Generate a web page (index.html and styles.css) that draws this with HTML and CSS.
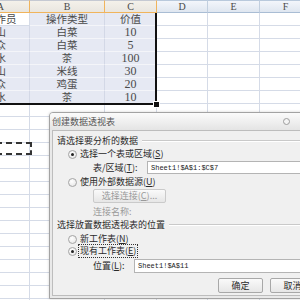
FILE: index.html
```html
<!DOCTYPE html>
<html lang="zh-CN">
<head>
<meta charset="utf-8">
<title>创建数据透视表</title>
<link rel="stylesheet" href="styles.css">
</head>
<body>
<div class="sheet">
  <div class="h s ha"><span>A</span></div><div class="h s">B</div><div class="h s">C</div><div class="h">D</div><div class="h">E</div><div class="h">F</div>

  <div class="c a act"><span>操作员</span></div><div class="c sel">操作类型</div><div class="c sel">价值</div><div class="c"></div><div class="c"></div><div class="c"></div>
  <div class="c a sel"><span>张山</span></div><div class="c sel">白菜</div><div class="c sel n">10</div><div class="c"></div><div class="c"></div><div class="c"></div>
  <div class="c a sel"><span>李众</span></div><div class="c sel">白菜</div><div class="c sel n">5</div><div class="c"></div><div class="c"></div><div class="c"></div>
  <div class="c a sel"><span>王水</span></div><div class="c sel">茶</div><div class="c sel n">100</div><div class="c"></div><div class="c"></div><div class="c"></div>
  <div class="c a sel"><span>张山</span></div><div class="c sel">米线</div><div class="c sel n">30</div><div class="c"></div><div class="c"></div><div class="c"></div>
  <div class="c a sel"><span>李众</span></div><div class="c sel">鸡蛋</div><div class="c sel n">20</div><div class="c"></div><div class="c"></div><div class="c"></div>
  <div class="c a sel"><span>王水</span></div><div class="c sel">茶</div><div class="c sel n">10</div><div class="c"></div><div class="c"></div><div class="c"></div>

  <div class="c"></div><div class="c"></div><div class="c"></div><div class="c"></div><div class="c"></div><div class="c"></div>
  <div class="c"></div><div class="c"></div><div class="c"></div><div class="c"></div><div class="c"></div><div class="c"></div>
  <div class="c"></div><div class="c"></div><div class="c"></div><div class="c"></div><div class="c"></div><div class="c"></div>
  <div class="c"></div><div class="c"></div><div class="c"></div><div class="c"></div><div class="c"></div><div class="c"></div>
  <div class="c"></div><div class="c"></div><div class="c"></div><div class="c"></div><div class="c"></div><div class="c"></div>
  <div class="c"></div><div class="c"></div><div class="c"></div><div class="c"></div><div class="c"></div><div class="c"></div>
  <div class="c"></div><div class="c"></div><div class="c"></div><div class="c"></div><div class="c"></div><div class="c"></div>
  <div class="c"></div><div class="c"></div><div class="c"></div><div class="c"></div><div class="c"></div><div class="c"></div>
  <div class="c"></div><div class="c"></div><div class="c"></div><div class="c"></div><div class="c"></div><div class="c"></div>
  <div class="c"></div><div class="c"></div><div class="c"></div><div class="c"></div><div class="c"></div><div class="c"></div>
  <div class="c"></div><div class="c"></div><div class="c"></div><div class="c"></div><div class="c"></div><div class="c"></div>
  <div class="c"></div><div class="c"></div><div class="c"></div><div class="c"></div><div class="c"></div><div class="c"></div>
  <div class="c"></div><div class="c"></div><div class="c"></div><div class="c"></div><div class="c"></div><div class="c"></div>
  <div class="c"></div><div class="c"></div><div class="c"></div><div class="c"></div><div class="c"></div><div class="c"></div>
  <div class="c"></div><div class="c"></div><div class="c"></div><div class="c"></div><div class="c"></div><div class="c"></div>
  <div class="c"></div><div class="c"></div><div class="c"></div><div class="c"></div><div class="c"></div><div class="c"></div>

  <div class="selbox"></div>
  <div class="handle"></div>
  <div class="marquee"></div>
</div>

<div class="dialog">
  <div class="titlebar">
    <span class="title">创建数据透视表</span>
    <span class="help"></span>
  </div>
  <div class="body">
    <div class="section s1"><span>请选择要分析的数据</span><span class="rule"></span></div>
    <div class="row opt r1"><span class="radio on"></span><span>选择一个表或区域(<u>S</u>)</span></div>
    <div class="row field f1"><span class="lbl">表/区域(<u>T</u>):</span><span class="input">Sheet1!$A$1:$C$7</span></div>
    <div class="row opt r2"><span class="radio"></span><span>使用外部数据源(<u>U</u>)</span></div>
    <div class="row sub b1"><span class="btn off">选择连接(<u>C</u>)...</span></div>
    <div class="row sub off c1">连接名称:</div>
    <div class="section s2"><span>选择放置数据透视表的位置</span><span class="rule"></span></div>
    <div class="row opt r3"><span class="radio"></span><span>新工作表(<u>N</u>)</span></div>
    <div class="row opt r4"><span class="radio on"></span><span class="focus">现有工作表(<u>E</u>)</span></div>
    <div class="row field f2"><span class="lbl">位置(<u>L</u>):</span><span class="input">Sheet1!$A$11</span></div>
    <div class="row actions"><span class="btn ok">确定</span><span class="btn cancel">取消</span></div>
  </div>
</div>
</body>
</html>
```
FILE: styles.css
```css
body {
  margin: 0;
  width: 300px;
  height: 300px;
  overflow: hidden;
  position: relative;
  background: #fff;
  font-family: "Noto Sans CJK SC", "Noto Sans", sans-serif;
}

/* ---------- spreadsheet ---------- */
.sheet {
  position: relative;
  display: grid;
  grid-template-columns: 30px 75px 52px 51px 52px 52px;
  grid-auto-rows: 13px;
}

.h {
  box-sizing: border-box;
  display: flex;
  align-items: center;
  justify-content: center;
  background: linear-gradient(#f3f6fb, #dfe6f0);
  border-top: 1px solid #b9c9dc;
  border-right: 1px solid #c2cfdf;
  border-bottom: 1px solid #a9bdd4;
  font-family: "Liberation Serif", serif;
  font-size: 10px;
  color: #4a4a4a;
}
.h.s {
  background: linear-gradient(#f4f1ea, #e9e6e0);
  border-right-color: #f0b45c;
  border-bottom-color: #f0b45c;
  border-top-color: #c5c9d2;
}
.h.ha {
  justify-content: flex-end;
  padding-right: 25px;
}

.c {
  box-sizing: border-box;
  display: flex;
  align-items: center;
  justify-content: center;
  overflow: hidden;
  white-space: nowrap;
  border-right: 1px solid #d5dbe7;
  border-bottom: 1px solid #d5dbe7;
  font-size: 10.5px;
  line-height: 12px;
  color: #4a4a4a;
}
.c.a {
  justify-content: flex-start;
}
.c.a span {
  margin-left: -15px;
}
.c.sel {
  background: #e6e9f3;
  border-right-color: #d3d8e6;
  border-bottom-color: #f4f5f9;
}
.c.act {
  background: #fff;
}
.c.n {
  font-family: "Liberation Serif", serif;
  font-size: 12px;
}

.selbox {
  position: absolute;
  left: -3px;
  top: 13px;
  width: 160px;
  height: 92px;
  box-sizing: border-box;
  border: 2px solid #111;
  border-top: 0;
}
.handle {
  position: absolute;
  left: 153px;
  top: 101px;
  width: 5px;
  height: 5px;
  background: #111;
  border: 1px solid #fff;
}
.marquee {
  position: absolute;
  left: -4px;
  top: 142px;
  width: 36px;
  height: 13px;
  box-sizing: border-box;
  border: 2px dashed #333;
}

/* ---------- dialog ---------- */
.dialog {
  position: absolute;
  left: 49px;
  top: 112px;
  width: 270px;
  height: 187px;
  box-sizing: border-box;
  display: flex;
  flex-direction: column;
  background: #e9e9e9;
  border: 1px solid #a3a3a3;
  border-radius: 4px 4px 0 0;
  padding: 0 2px 2px 2px;
  box-shadow: 0 0 3px rgba(0, 0, 0, 0.18);
  font-size: 9px;
  line-height: 12px;
  color: #2a2a2a;
}
.titlebar {
  height: 17px;
  flex: none;
  display: flex;
  align-items: center;
  justify-content: space-between;
  padding: 0 28px 0 2px;
  background: linear-gradient(#fbfbfb, #e4e4e4);
  margin: 0 -2px;
  border-radius: 3px 3px 0 0;
}
.title {
  color: #555;
  font-size: 9px;
}
.help {
  width: 5px;
  height: 5px;
  border: 1px solid #9c9c9c;
  border-radius: 50%;
  background: #f4f4f4;
}
.body {
  flex: 1;
  display: flex;
  flex-direction: column;
  background: #f0f0f0;
  border: 1px solid #bdbdbd;
  padding: 0 0 0 4px;
}

.section {
  display: flex;
  align-items: center;
  height: 12px;
}
.section .rule {
  flex: 1;
  margin-left: 4px;
  border-top: 1px solid #c9c9c9;
  border-bottom: 1px solid #fff;
}
.s1 { margin-top: 4px; }
.s2 { margin-top: 1px; }

.row {
  display: flex;
  align-items: center;
  height: 12px;
  white-space: nowrap;
}
.opt { padding-left: 11px; }
.sub { padding-left: 36px; }
.r1 { margin-top: 1px; }
.f1 { margin-top: 1px; height: 13px; }
.r2 { margin-top: 2px; }
.b1 { margin-top: 1px; height: 14px; }
.c1 { margin-top: 3px; }
.r3 { margin-top: 2px; }
.r4 { margin-top: 0; }
.f2 { margin-top: 2px; height: 14px; }
.actions { margin-top: 5px; height: 15px; padding-left: 161px; gap: 7px; }

.radio {
  flex: none;
  width: 9px;
  height: 9px;
  box-sizing: border-box;
  margin-right: 3px;
  border: 1px solid #a4a4a4;
  border-radius: 50%;
  background: radial-gradient(circle at 40% 35%, #fff, #e2e2e2);
  display: flex;
  align-items: center;
  justify-content: center;
}
.radio.on::after {
  content: "";
  width: 3px;
  height: 3px;
  border-radius: 50%;
  background: #222;
}
.focus {
  outline: 1px dotted #333;
  outline-offset: 0;
  margin-left: -1px;
  padding: 0 1px;
}

.field .lbl {
  padding-left: 36px;
}
.f1 .lbl { width: 54px; }
.f2 .lbl { width: 41px; }
.input {
  flex: 1;
  align-self: stretch;
  display: flex;
  align-items: center;
  padding-left: 3px;
  background: #fff;
  border: 1px solid #b4b4b4;
  font-family: "Liberation Mono", monospace;
  font-size: 7px;
  color: #222;
}

.btn {
  box-sizing: border-box;
  display: flex;
  align-items: center;
  justify-content: center;
  height: 100%;
  border: 1px solid #a8a8a8;
  border-radius: 2px;
  background: linear-gradient(#fafafa, #e6e6e6);
}
.btn.off {
  width: 73px;
  color: #9a9a9a;
  border-color: #cacaca;
}
.off { color: #9a9a9a; }
.btn.ok, .btn.cancel { width: 53px; }
u { text-decoration: underline; text-underline-offset: 1px; }
```
